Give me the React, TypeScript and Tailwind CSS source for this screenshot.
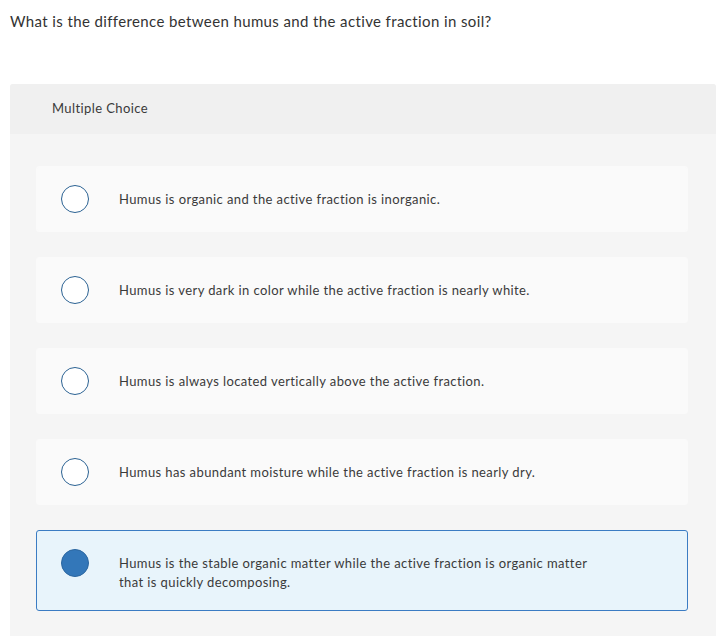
const options = [
  "Humus is organic and the active fraction is inorganic.",
  "Humus is very dark in color while the active fraction is nearly white.",
  "Humus is always located vertically above the active fraction.",
  "Humus has abundant moisture while the active fraction is nearly dry.",
  "Humus is the stable organic matter while the active fraction is organic matter that is quickly decomposing.",
];

const selected = 4;

export default function App() {
  return (
    <div className="min-h-[636px] bg-white font-['Lato','Liberation_Sans',sans-serif] text-[#333]">
      <div className="px-[10px] pt-[12px] text-[15px] leading-[18px] tracking-[0.38px] text-[#333]">
        What is the difference between humus and the active fraction in soil?
      </div>
      <div className="mx-[10px] mt-[54px] w-[706px] overflow-hidden rounded-t-[3px] bg-[#f5f5f5]">
        <div className="flex h-[50px] items-center bg-[#f0f0f0] pl-[42px] text-[13px] tracking-[0.4px] text-[#3a3a3a]">
          Multiple Choice
        </div>
        <div className="flex flex-col gap-[25px] pb-[40px] pl-[26px] pr-[28px] pt-[32px]">
          {options.map((text, i) => {
            const isSel = i === selected;
            return (
              <label
                key={i}
                className={
                  isSel
                    ? "flex items-start gap-[30px] rounded-[3px] border border-[#3b7cc3] bg-[#e8f4fb] px-[24px] py-[18px]"
                    : "flex items-start gap-[30px] rounded-[3px] border border-[#fafafa] bg-[#fafafa] px-[24px] py-[18px]"
                }
              >
                <span
                  className={
                    isSel
                      ? "h-[28px] w-[28px] shrink-0 rounded-full border-[1.5px] border-[#2b66a0] bg-[#3377b9]"
                      : "h-[28px] w-[28px] shrink-0 rounded-full border-[1.5px] border-[#2b6293] bg-white"
                  }
                />
                <span className="mt-[4.5px] max-w-[472px] text-[13px] leading-[19px] tracking-[0.4px] text-[#3a3a3a]">
                  {text}
                </span>
              </label>
            );
          })}
        </div>
      </div>
    </div>
  );
}
